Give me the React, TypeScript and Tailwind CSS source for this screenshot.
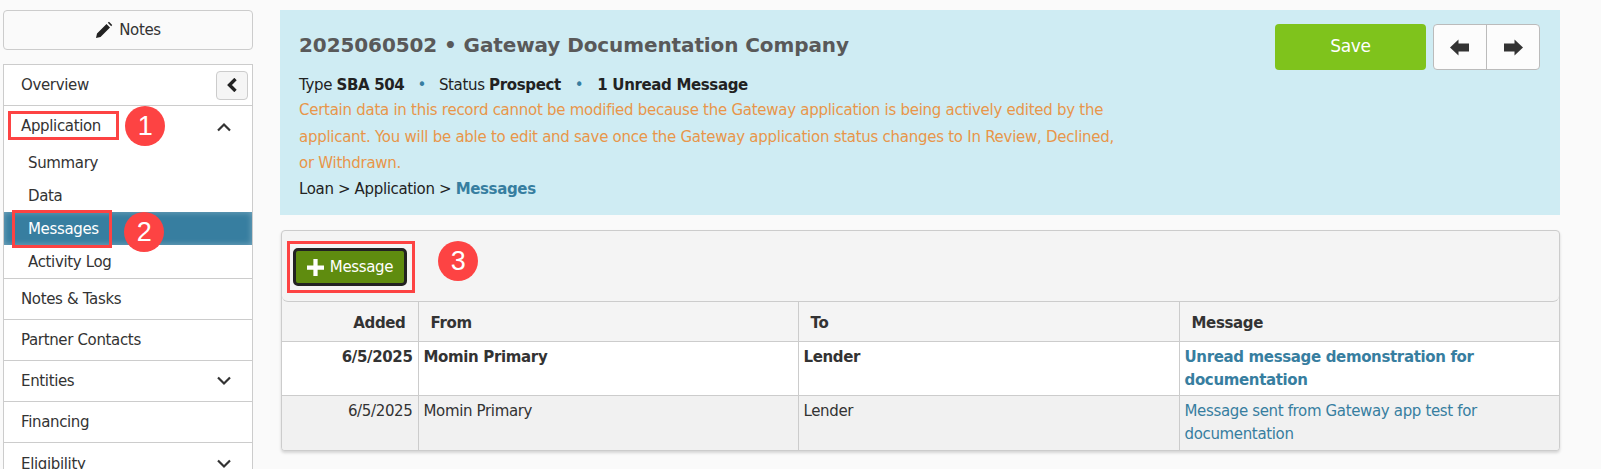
import type { ReactNode } from "react";

const FONT = "[font-family:'DejaVu_Sans',sans-serif]";

function Chevron({ up }: { up?: boolean }) {
  return (
    <svg width="16" height="10" viewBox="0 0 16 10" className="text-[#333]">
      <path d={up ? "M2 8.5 L8 2.5 L14 8.5" : "M2 1.5 L8 7.5 L14 1.5"} fill="none" stroke="currentColor" strokeWidth="2.2" />
    </svg>
  );
}

function Arrow({ left }: { left?: boolean }) {
  return (
    <svg width="20" height="17" viewBox="0 0 20 17" className="text-[#333]">
      <path d={left ? "M0 8.5 L8.5 0.5 L8.5 4.5 L19 4.5 L19 12.5 L8.5 12.5 L8.5 16.5 Z" : "M20 8.5 L11.5 0.5 L11.5 4.5 L1 4.5 L1 12.5 L11.5 12.5 L11.5 16.5 Z"} fill="currentColor" />
    </svg>
  );
}

function Badge({ n, className }: { n: number; className: string }) {
  return (
    <div className={`absolute w-10 h-10 rounded-full bg-[#fd4343] text-white flex items-center justify-center text-[27px] [font-family:'Liberation_Sans',sans-serif] ${className}`}>
      {n}
    </div>
  );
}

function NavRow({ label, children }: { label: string; children?: ReactNode }) {
  return (
    <div className="h-[41px] border-b border-[#ccc] pl-[17px] pr-5 flex items-center justify-between last:border-b-0">
      <span className="pt-px">{label}</span>
      {children}
    </div>
  );
}

const rows = [
  { added: "6/5/2025", from: "Momin Primary", to: "Lender", message: "Unread message demonstration for documentation", unread: true },
  { added: "6/5/2025", from: "Momin Primary", to: "Lender", message: "Message sent from Gateway app test for documentation", unread: false },
];

export default function App() {
  return (
    <div className={`relative h-[469px] overflow-hidden bg-[#fafafa] text-[#333] text-[15px] tracking-[-0.35px] ${FONT}`}>
      <div className="flex items-start">
        {/* sidebar */}
        <aside className="w-[250px] ml-[3px] mt-[10px] shrink-0">
          <button className="w-full h-10 border border-[#ccc] rounded bg-[#fafafa] flex items-center justify-center gap-[6px]">
            <svg width="18" height="18" viewBox="0 0 18 18" className="text-[#222]">
              <path d="M1 17 L2 12.5 L11.5 3 L15 6.5 L5.5 16 Z M12.8 1.8 L14 0.8 L17.2 4 L16.2 5.2 Z" fill="currentColor" />
            </svg>
            Notes
          </button>
          <nav className="mt-[14px] bg-white border border-[#ccc] border-b-0 h-[405px]">
            <div className="h-[41px] border-b border-[#ccc] pl-[17px] pr-[4px] flex items-center justify-between">
              <span className="pt-px">Overview</span>
              <button className="w-8 h-[29px] border border-[#ccc] rounded bg-[#f5f5f5] flex items-center justify-center">
                <svg width="12" height="14" viewBox="0 0 12 14" className="text-[#222]">
                  <path d="M9.5 1 L3.5 7 L9.5 13" fill="none" stroke="currentColor" strokeWidth="3.4" />
                </svg>
              </button>
            </div>
            <div className="h-[41px] pl-[17px] pr-5 flex items-center justify-between">
              <span>Application</span>
              <Chevron up />
            </div>
            <div className="h-[33px] pl-6 flex items-center">Summary</div>
            <div className="h-[32px] pl-6 flex items-center">Data</div>
            <div className="h-[33px] pl-6 pt-[2px] flex items-center text-white bg-[#377ea0] shadow-[inset_0_0_6px_rgba(255,255,255,0.35)]">Messages</div>
            <div className="h-[34px] pl-6 pt-px flex items-center border-b border-[#ccc]">Activity Log</div>
            <NavRow label="Notes & Tasks" />
            <NavRow label="Partner Contacts" />
            <NavRow label="Entities"><Chevron /></NavRow>
            <NavRow label="Financing" />
            <NavRow label="Eligibility"><Chevron /></NavRow>
          </nav>
        </aside>

        {/* main */}
        <main className="w-[1280px] ml-[27px] mt-[10px] shrink-0">
          <section className="h-[205px] bg-[#cfecf3] pl-[19px] pr-5 pt-[14px] flex justify-between">
            <div className="w-[825px]">
              <h1 className="text-[20px] font-bold text-[#595959] leading-[42px] tracking-[-0.1px]">
                2025060502 • Gateway Documentation Company
              </h1>
              <p className="mt-[6px] leading-[26px] text-[#222]">
                Type <b>SBA 504</b><span className="text-[#377ea0] mx-[13px]">•</span>Status <b>Prospect</b>
                <span className="text-[#377ea0] mx-[14px]">•</span><b>1 Unread Message</b>
              </p>
              <p className="-mt-px leading-[26.5px] tracking-[-0.27px] text-[#e8964a]">
                Certain data in this record cannot be modified because the Gateway application is being actively edited by the applicant. You will be able to edit and save once the Gateway application status changes to In Review, Declined, or Withdrawn.
              </p>
              <p className="-mt-px leading-[26px] text-[#222]">
                Loan &gt; Application &gt; <b className="text-[#377ea0]">Messages</b>
              </p>
            </div>
            <div className="flex items-start gap-[7px]">
              <button className="w-[151px] h-[46px] rounded bg-[#7fc31c] text-white text-[17px]">Save</button>
              <div className="flex h-[46px] rounded border border-[#bbb] bg-[#fcfcfc]">
                <button className="w-[53px] border-r border-[#bbb] flex items-center justify-center"><Arrow left /></button>
                <button className="w-[52px] flex items-center justify-center"><Arrow /></button>
              </div>
            </div>
          </section>

          <section className="mt-[15px] ml-px border border-[#ccc] rounded bg-[#f4f4f4] shadow-[0_2px_3px_rgba(0,0,0,0.15)] overflow-hidden">
            <div className="h-[71px] border-b border-[#ccc] pl-[11px] pt-[17px] rounded-b-md">
              <button className="w-[114px] h-[38px] rounded-[5px] border-[3px] border-[#222] bg-[#5f8c0f] text-white flex items-center justify-center gap-[6px]">
                <svg width="17" height="17" viewBox="0 0 16 16"><path d="M6 0 H10 V6 H16 V10 H10 V16 H6 V10 H0 V6 H6 Z" fill="currentColor" /></svg>
                Message
              </button>
            </div>
            <table className="w-full table-fixed border-collapse">
              <colgroup>
                <col className="w-[136px]" />
                <col className="w-[380px]" />
                <col className="w-[381px]" />
                <col />
              </colgroup>
              <thead>
                <tr className="h-[39px] border-b border-[#ccc]">
                  <th className="text-right pr-3 pt-[3px] font-bold">Added</th>
                  <th className="text-left pl-3 pt-[3px] border-l border-[#ccc] font-bold">From</th>
                  <th className="text-left pl-3 pt-[3px] border-l border-[#ccc] font-bold">To</th>
                  <th className="text-left pl-3 pt-[3px] border-l border-[#ccc] font-bold">Message</th>
                </tr>
              </thead>
              <tbody>
                {rows.map((row, i) => (
                  <tr key={i} className={`align-top leading-[23px] ${row.unread ? "h-[54px] bg-white font-bold" : "h-[55px] bg-[#f1f1f1] border-t border-[#ccc]"}`}>
                    <td className="text-right pr-[5px] pt-1">{row.added}</td>
                    <td className="pl-[5px] pt-1 border-l border-[#ccc]">{row.from}</td>
                    <td className="pl-[5px] pt-1 border-l border-[#ccc]">{row.to}</td>
                    <td className="pl-[5px] pr-16 pt-1 border-l border-[#ccc] text-[#377ea0]">{row.message}</td>
                  </tr>
                ))}
              </tbody>
            </table>
          </section>
        </main>
      </div>

      {/* tutorial annotations */}
      <div className="absolute left-[8px] top-[111px] w-[111px] h-[29px] border-[3px] border-[#fd4343]" />
      <div className="absolute left-[12px] top-[210px] w-[100px] h-[38px] border-[3px] border-[#fd4343]" />
      <div className="absolute left-[287px] top-[241px] w-[128px] h-[52px] border-[3px] border-[#fd4343]" />
      <Badge n={1} className="left-[125px] top-[106px]" />
      <Badge n={2} className="left-[124px] top-[212px]" />
      <Badge n={3} className="left-[438px] top-[241px]" />
    </div>
  );
}
